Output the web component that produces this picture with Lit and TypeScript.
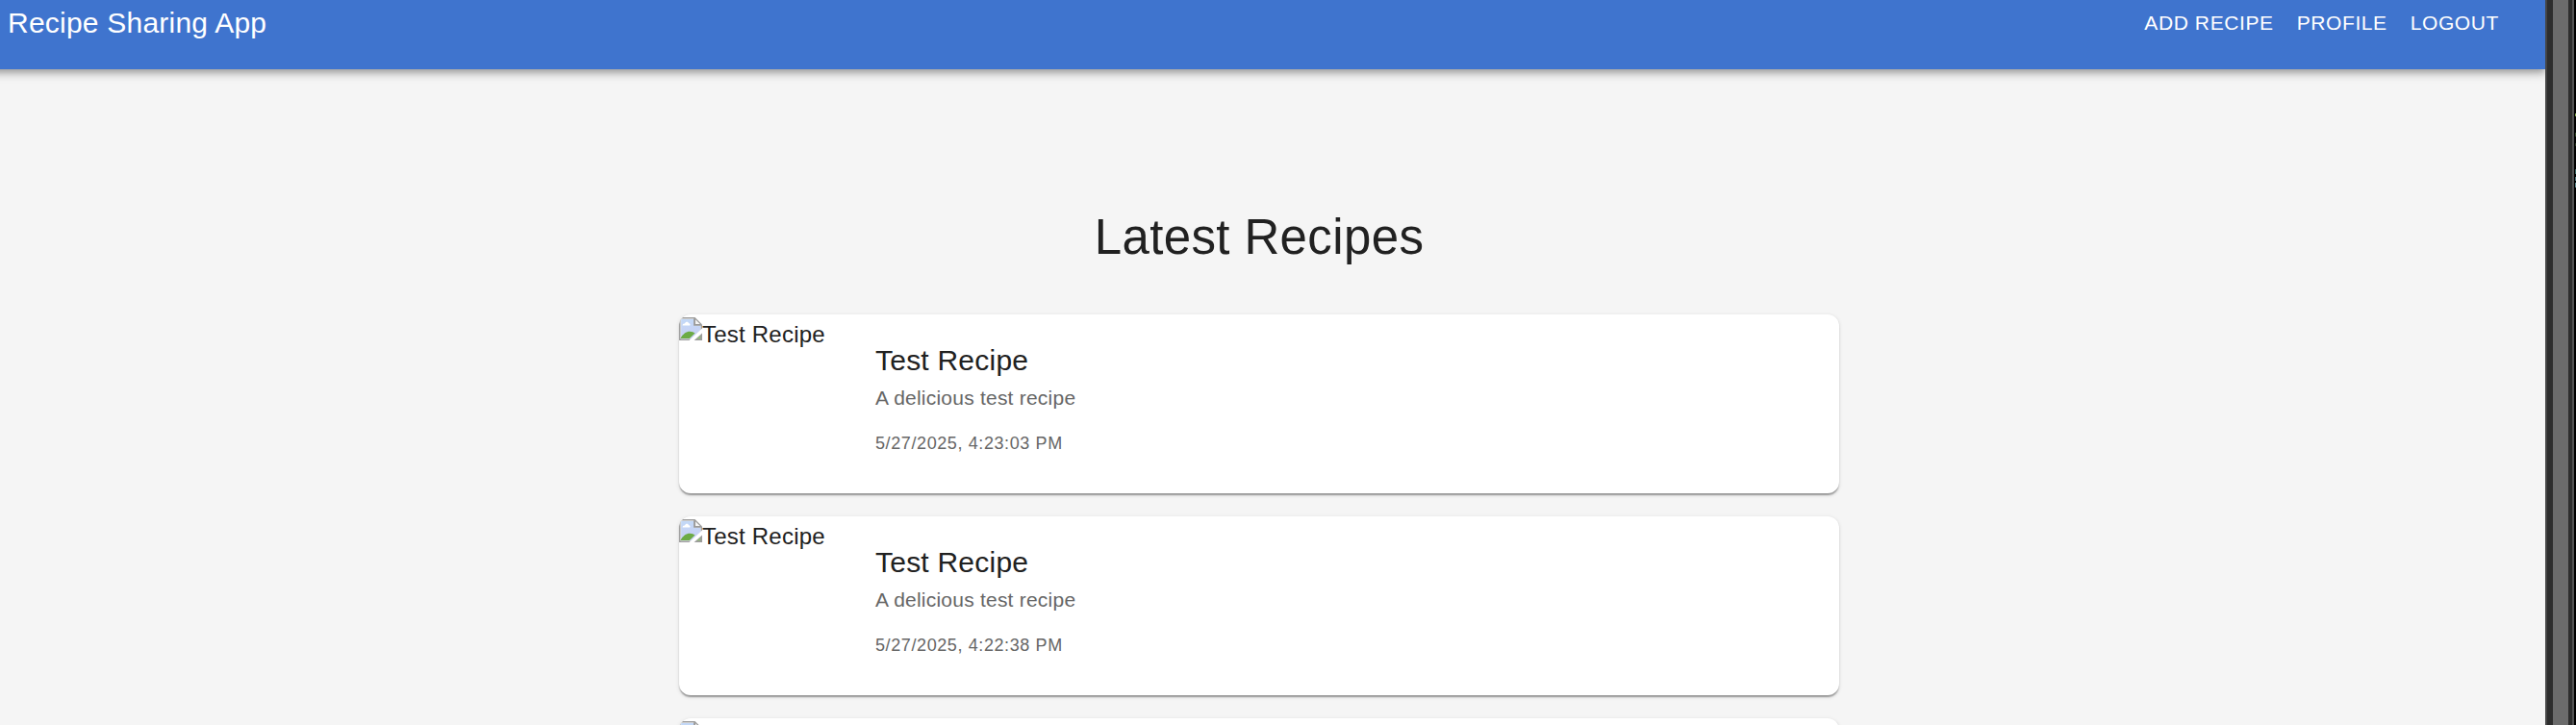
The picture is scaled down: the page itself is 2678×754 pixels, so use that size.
import { LitElement, html, css, svg } from "lit";
import { customElement, property } from "lit/decorators.js";

const recipes = [
  { title: "Test Recipe", description: "A delicious test recipe", date: "5/27/2025, 4:23:03 PM" },
  { title: "Test Recipe", description: "A delicious test recipe", date: "5/27/2025, 4:22:38 PM" },
  { title: "", description: "", date: "" },
];

const brokenImage = html`<svg class="broken" viewBox="0 0 16 16" aria-hidden="true">
  ${svg`
    <defs><linearGradient id="sky" x1="0" y1="0" x2="0" y2="1">
      <stop offset="0" stop-color="#c3d9f7"/><stop offset="1" stop-color="#c9cff3"/>
    </linearGradient></defs>
    <path d="M0 0H11L16 5V9.5L9.3 16H0Z" fill="#9c9c9c"/>
    <path d="M1 1H10.5V5.5H15V9L8.5 15H1Z" fill="#fff"/>
    <path d="M1.4 1.4H10.2V5.8H14.8V9L8.8 14.8H1.4Z" fill="url(#sky)"/>
    <path d="M10.4 0.8V5.4H15.2" fill="none" stroke="#9c9c9c" stroke-width="0.8"/>
    <path d="M11.3 1.5L14.5 4.7H11.3Z" fill="#f4f4f4"/>
    <path d="M2.4 5.6C2.2 4.4 3.6 4.2 4 4.3C4.3 2.8 6.3 2.8 6.6 4.1C7.8 4 8 5.6 7.3 5.6Z" fill="#fff"/>
    <path d="M1 14.6C2.5 11.5 5 9.8 7.4 9.8C9 9.8 10.2 10.4 11 11L7.2 14.6Z" fill="#6cab45"/>
    <path d="M16 7.6L7 16H9.8L16 10.6Z" fill="#fff"/>
    <path d="M16 11V16H10.4Z" fill="#9c9c9c"/>
    <path d="M14.8 12.8V14.8H12.2Z" fill="#8fc072"/>`}
</svg>`;

@customElement("recipe-card")
export class RecipeCard extends LitElement {
  @property() heading = "";
  @property() description = "";
  @property() date = "";

  static styles = css`
    :host {
      display: flex;
      flex: none;
      height: 186px;
      overflow: hidden;
      border-radius: 12px;
      background: #fff;
      box-shadow: 0 3px 1.5px -1.5px rgba(0, 0, 0, 0.2), 0 1.5px 1.5px 0 rgba(0, 0, 0, 0.14),
        0 1.5px 4.5px 0 rgba(0, 0, 0, 0.12);
    }
    .media {
      display: flex;
      align-items: flex-start;
      width: 180px;
      padding-top: 3px;
      box-sizing: border-box;
      font-size: 24px;
      line-height: 36px;
      letter-spacing: 0.00938em;
      white-space: nowrap;
    }
    .broken { width: 24px; height: 24px; flex: none; }
    .content { padding: 24px; }
    .title { font-size: 30px; line-height: 48px; letter-spacing: 0.0075em; }
    .description { font-size: 21px; line-height: 30px; letter-spacing: 0.01071em; color: #666; }
    .date { margin-top: 17px; font-size: 18px; line-height: 30px; letter-spacing: 0.03333em; color: #666; }
  `;

  render() {
    return html`
      <div class="media">${brokenImage}<span>${this.heading}</span></div>
      <div class="content">
        <div class="title">${this.heading}</div>
        <div class="description">${this.description}</div>
        <div class="date">${this.date}</div>
      </div>
    `;
  }
}

@customElement("app-root")
export class AppRoot extends LitElement {
  static styles = css`
    :host {
      display: flex;
      width: 100%;
      height: 754px;
      overflow: hidden;
      background: #f5f5f5;
      color: #212121;
      font-family: "Liberation Sans", Arial, sans-serif;
    }
    .page { flex: 1; min-width: 0; overflow: hidden; display: flex; flex-direction: column; }
    .bar {
      flex: none;
      display: flex;
      justify-content: space-between;
      height: 72px;
      box-sizing: border-box;
      margin-left: -28px;
      padding: 0 48px 0 36px;
      background: #3f74ce;
      color: #fff;
      line-height: 48px;
      box-shadow: 0 3px 6px -1.5px rgba(0, 0, 0, 0.2), 0 6px 7.5px 0 rgba(0, 0, 0, 0.14),
        0 1.5px 15px 0 rgba(0, 0, 0, 0.12);
    }
    .brand { font-size: 30px; letter-spacing: 0.0075em; }
    .nav { display: flex; gap: 24px; font-size: 21px; letter-spacing: 0.02857em; }
    .main { display: flex; flex-direction: column; gap: 24px; width: 1206px; margin-left: 706px; padding-top: 143px; }
    .heading {
      margin: 0 0 25px;
      font-size: 51px;
      font-weight: 400;
      line-height: 63px;
      letter-spacing: 0.00735em;
      text-align: center;
    }
    .edge { flex: none; display: flex; width: 32px; background: #000; }
    .line { width: 2px; background: #454545; }
    .gutter { width: 6px; background: #2d2d2d; }
    .thumb { width: 16px; background: #6b6b6b; }
    .narrow { width: 4px; }
    .rim { width: 2px; background: #525252; }
    .specks {
      width: 1px;
      margin-left: 1px;
      background: linear-gradient(
        #000 118px, #7fa650 118px 121px, #000 121px 138px, #2f4526 138px 142px, #000 142px 149px,
        #26331f 149px 152px, #000 152px 176px, #35605c 176px 181px, #000 181px 184px,
        #4a7478 184px 188px, #000 188px 190px, #5d888c 190px 195px, #000 195px
      );
    }
  `;

  render() {
    return html`
      <div class="page">
        <header class="bar">
          <div class="brand">Recipe Sharing App</div>
          <nav class="nav"><span>ADD RECIPE</span><span>PROFILE</span><span>LOGOUT</span></nav>
        </header>
        <main class="main">
          <h1 class="heading">Latest Recipes</h1>
          ${recipes.map(
            (r) => html`<recipe-card .heading=${r.title} .description=${r.description} .date=${r.date}></recipe-card>`
          )}
        </main>
      </div>
      <div class="edge">
        <div class="line"></div>
        <div class="gutter"></div>
        <div class="thumb"></div>
        <div class="gutter narrow"></div>
        <div class="rim"></div>
        <div class="specks"></div>
      </div>
    `;
  }
}
